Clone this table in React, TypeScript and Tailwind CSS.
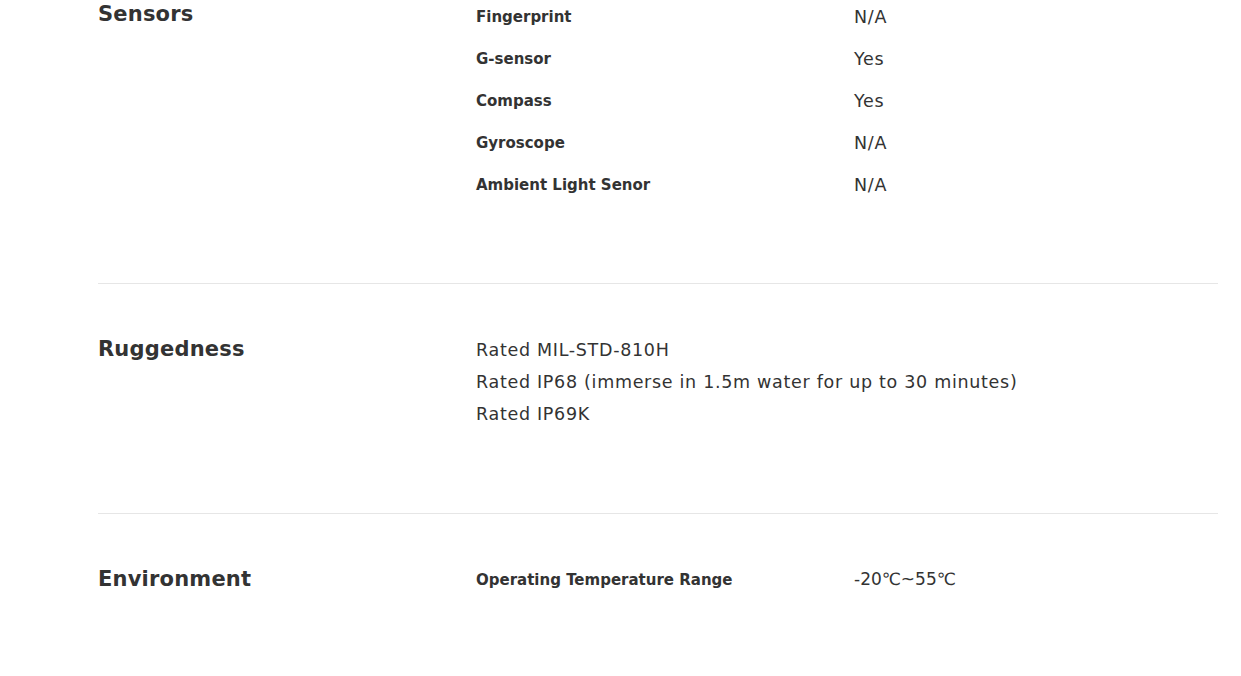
import React from 'react';

type Row = { label: string; value: string };

const sensors: Row[] = [
  { label: 'Fingerprint', value: 'N/A' },
  { label: 'G-sensor', value: 'Yes' },
  { label: 'Compass', value: 'Yes' },
  { label: 'Gyroscope', value: 'N/A' },
  { label: 'Ambient Light Senor', value: 'N/A' },
];

const ruggedness = [
  'Rated MIL-STD-810H',
  'Rated IP68 (immerse in 1.5m water for up to 30 minutes)',
  'Rated IP69K',
];

function SpecRows({ rows }: { rows: Row[] }) {
  return (
    <div className="flex flex-col">
      {rows.map((r) => (
        <div key={r.label} className="flex h-[42px] items-center">
          <div className="w-[378px] text-[15px] font-bold text-[#333]">{r.label}</div>
          <div className="text-[17.5px] tracking-[0.7px] text-[#333]">{r.value}</div>
        </div>
      ))}
    </div>
  );
}

export default function App() {
  return (
    <div
      className="min-h-[676px] bg-white pl-[98px] pr-[23px] text-[#333]"
      style={{ fontFamily: '"DejaVu Sans", "Liberation Sans", sans-serif' }}
    >
      <section className="-mt-[4px] flex pb-[77px]">
        <h2 className="w-[378px] pt-[4px] text-[21px] font-bold leading-[28px] tracking-[0.2px]">Sensors</h2>
        <SpecRows rows={sensors} />
      </section>

      <section className="flex border-t border-[#e6e6e6] pt-[50px] pb-[83px]">
        <h2 className="w-[378px] pt-[1px] text-[21px] font-bold leading-[28px] tracking-[0.2px]">Ruggedness</h2>
        <div className="flex flex-col text-[17.5px] leading-[32px] tracking-[0.7px]">
          {ruggedness.map((t) => (
            <div key={t}>{t}</div>
          ))}
        </div>
      </section>

      <section className="flex border-t border-[#e6e6e6] pt-[50px]">
        <h2 className="w-[378px] pt-[1px] text-[21px] font-bold leading-[28px] tracking-[0.2px]">Environment</h2>
        <div className="flex h-[32px] items-center">
          <div className="w-[378px] text-[15px] font-bold">Operating Temperature Range</div>
          <div className="text-[17px]">-20℃~55℃</div>
        </div>
      </section>
    </div>
  );
}
